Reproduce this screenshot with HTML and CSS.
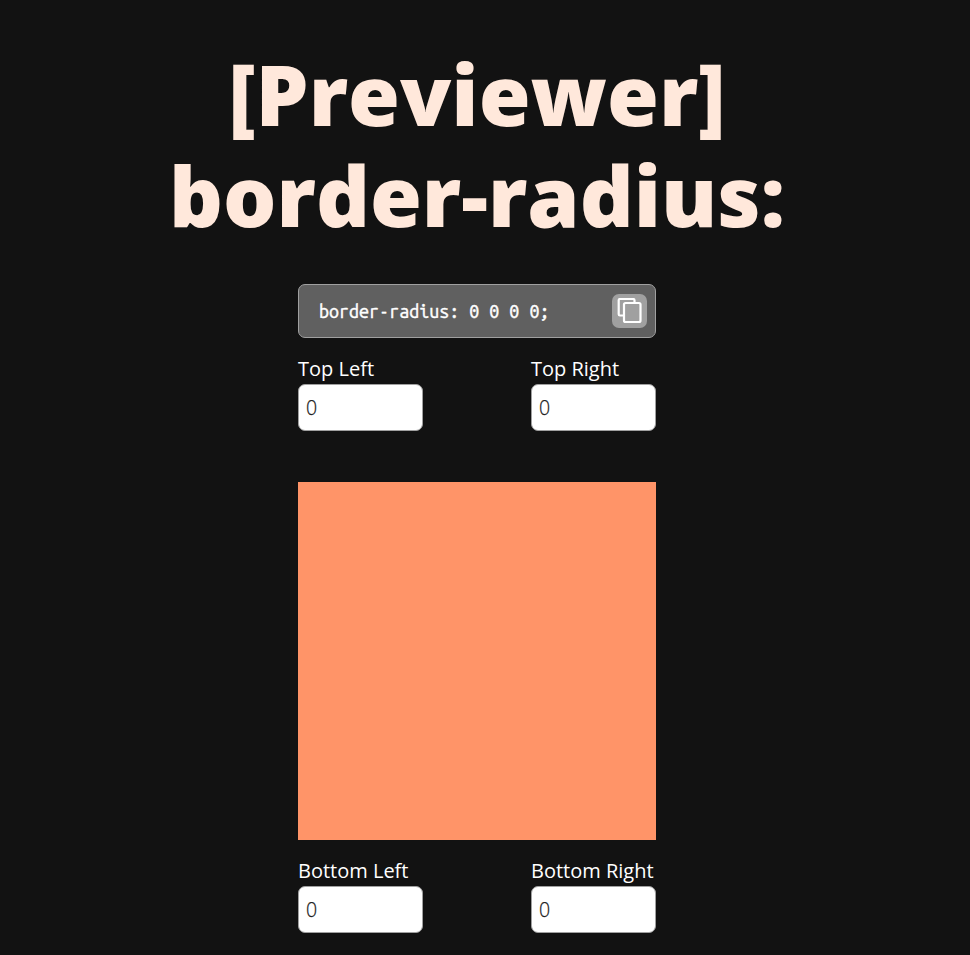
FILE: index.html
```html
<!DOCTYPE html>
<html lang="en">
<head>
<meta charset="utf-8">
<title>Border radius previewer</title>
<link rel="stylesheet" href="styles.css">
</head>
<body>
<main class="page">
  <h1 class="title">[Previewer]<br>border-radius:</h1>
  <section class="previewer">
    <div class="output">
      <code class="code">border-radius: 0 0 0 0;</code>
      <button class="copy" type="button" aria-label="Copy">
        <svg width="25" height="26" viewBox="0 0 25 26" fill="none" stroke="#fff" stroke-width="2.2" stroke-linejoin="round"><rect x="7" y="5" width="16.5" height="19" rx="1.5"/><path d="M7 17.5H3a1.3 1.3 0 0 1-1.3-1.3V2.3A1.3 1.3 0 0 1 3 1h13.2a1.3 1.3 0 0 1 1.3 1.3V5"/></svg>
      </button>
    </div>
    <div class="row">
      <label class="field">Top Left<input class="input" value="0"></label>
      <label class="field">Top Right<input class="input" value="0"></label>
    </div>
    <div class="box"></div>
    <div class="row">
      <label class="field">Bottom Left<input class="input" value="0"></label>
      <label class="field">Bottom Right<input class="input" value="0"></label>
    </div>
  </section>
</main>
</body>
</html>
```
FILE: styles.css
```css
* { box-sizing: border-box; }
body {
  margin: 0;
  height: 955px;
  overflow: hidden;
  background: #121212;
  color: #fff;
  font-family: "Open Sans", sans-serif;
  font-size: 20px;
}
.page { width: 954px; padding-top: 43px; }
.title {
  margin: 0 0 39px;
  color: #ffe8db;
  font-size: 84px;
  font-weight: 800;
  line-height: 101px;
  text-align: center;
}
.previewer { width: 358px; margin: 0 auto; }
.output {
  display: flex;
  align-items: center;
  justify-content: space-between;
  height: 54px;
  padding: 0 8px 0 20px;
  margin-bottom: 17px;
  border: 1px solid #a0a0a0;
  border-radius: 7px;
  background: #606060;
}
.code {
  font-family: "Ubuntu Mono", "DejaVu Sans Mono", monospace;
  font-size: 17.9px;
  -webkit-text-stroke: 0.45px #fff;
}
.copy {
  display: flex;
  align-items: center;
  justify-content: center;
  width: 35px;
  height: 34px;
  padding: 0;
  border: 0;
  border-radius: 7px;
  background: #a0a0a0;
}
.row { display: flex; justify-content: space-between; }
.field { width: 125px; line-height: 27px; white-space: nowrap; }
.input {
  display: block;
  width: 125px;
  height: 47px;
  margin-top: 2px;
  padding: 0 7px;
  border: 1px solid #a0a0a0;
  border-radius: 7px;
  background: #fff;
  color: #222;
  font: 300 19.5px "Open Sans", sans-serif;
  -webkit-text-stroke: 0.25px #222;
}
.box { height: 358px; margin: 51px 0 17px; background: #ff9468; }
```
